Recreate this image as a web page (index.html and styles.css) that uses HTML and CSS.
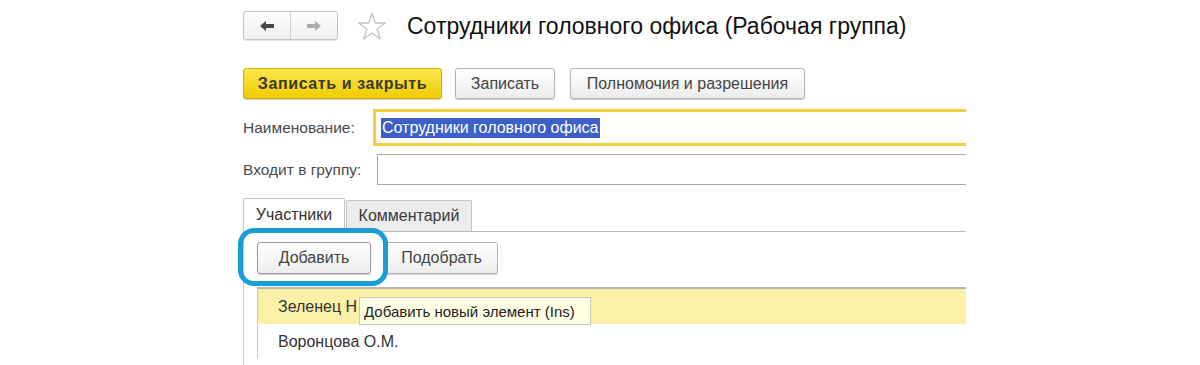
FILE: index.html
```html
<!DOCTYPE html>
<html lang="ru">
<head>
    <meta charset="UTF-8">
    <title>Сотрудники головного офиса (Рабочая группа)</title>
    <link rel="stylesheet" href="styles.css">
</head>
<body>
    <div class="form">
        <header class="titlebar">
            <div class="nav">
                <button class="nav-btn">
                    <svg width="16" height="12" viewBox="0 0 16 12"><path d="M1 6 L7 1 L7 4 L15 4 L15 8 L7 8 L7 11 Z" fill="#474747"/></svg>
                </button>
                <button class="nav-btn">
                    <svg width="16" height="12" viewBox="0 0 16 12"><path d="M15 6 L9 1 L9 4 L1 4 L1 8 L9 8 L9 11 Z" fill="#ababab"/></svg>
                </button>
            </div>
            <svg class="star" width="30" height="29" viewBox="0 0 30 29">
                <path d="M15 1.5 L18.3 11 L28.3 11 L20.2 17 L23.3 27 L15 21 L6.7 27 L9.8 17 L1.7 11 L11.7 11 Z" fill="none" stroke="#c4c4c4" stroke-width="1.3" stroke-linejoin="round"/>
            </svg>
            <h1>Сотрудники головного офиса (Рабочая группа)</h1>
        </header>

        <div class="toolbar">
            <button class="btn btn-main">Записать и закрыть</button>
            <button class="btn btn-save">Записать</button>
            <button class="btn btn-rights">Полномочия и разрешения</button>
        </div>

        <div class="field">
            <label>Наименование:</label>
            <div class="input focused"><span class="selected">Сотрудники головного офиса</span></div>
        </div>
        <div class="field">
            <label>Входит в группу:</label>
            <div class="input"></div>
        </div>

        <div class="tabs">
            <div class="tab active">Участники</div>
            <div class="tab second">Комментарий</div>
            <div class="tab-rest"></div>
        </div>

        <div class="panel">
            <div class="panel-bar">
                <button class="btn btn-add">Добавить</button>
                <button class="btn btn-pick">Подобрать</button>
                <div class="mark"></div>
            </div>
            <div class="list">
                <div class="row current">Зеленец Н</div>
                <div class="row">Воронцова О.М.</div>
                <div class="tooltip">Добавить новый элемент (Ins)</div>
            </div>
        </div>
    </div>
</body>
</html>
```

FILE: styles.css
```css
* {
    margin: 0;
    padding: 0;
    box-sizing: border-box;
    font-family: 'Liberation Sans', Arial, sans-serif;
}

body {
    background: #fff;
    color: #444;
    overflow: hidden;
}

.form {
    width: 966px;
    padding: 11px 0 0 243px;
}

/* header */
.titlebar {
    display: flex;
    align-items: center;
    height: 29px;
}
.nav {
    display: flex;
    width: 95px;
    height: 29px;
    border: 1px solid #c3c3c3;
    border-radius: 3px;
    background: linear-gradient(#fdfdfd, #efefef);
    box-shadow: 0 1px 1px rgba(0,0,0,0.12);
}
.nav-btn {
    flex: 1;
    border: none;
    background: none;
    display: flex;
    align-items: center;
    justify-content: center;
}
.nav-btn + .nav-btn {
    border-left: 1px solid #d0d0d0;
}
.star {
    margin-left: 19px;
    margin-top: 2px;
}
.titlebar h1 {
    margin-left: 20px;
    font-size: 23px;
    font-weight: normal;
    color: #111;
    margin-top: 2px;
}

/* buttons */
.btn {
    height: 31px;
    border: 1px solid #b3b3b3;
    border-radius: 3px;
    background: linear-gradient(#ffffff, #ececec);
    box-shadow: 0 1px 1px rgba(0,0,0,0.2);
    font-size: 16px;
    color: #444;
    cursor: pointer;
}
.toolbar {
    display: flex;
    margin-top: 28px;
}
.btn-main {
    width: 199px;
    font-weight: bold;
    letter-spacing: 0.6px;
    color: #3a3a2a;
    background: linear-gradient(#fbe64c, #f1cc02);
    border-color: #cdae0a;
}
.btn-save {
    width: 100px;
    margin-left: 13px;
}
.btn-rights {
    width: 235px;
    margin-left: 15px;
}

/* fields */
.field {
    display: flex;
    align-items: center;
    height: 31px;
    color: #4a4a4a;
    font-size: 15.5px;
}
.field label {
    width: 134px;
}
.input {
    flex: 1;
    height: 31px;
    border: 1px solid #aaa;
    border-right: none;
    background: #fff;
    display: flex;
    align-items: center;
    padding-left: 3px;
}
.toolbar + .field {
    margin-top: 10px;
    height: 37px;
}
.field + .field {
    margin-top: 8px;
}
.input.focused {
    border: 3px solid #f3d13c;
    border-right: none;
    height: 37px;
    margin-left: -4px;
    padding-left: 5px;
    background: #fffefa;
}
.selected {
    background: #3c60c6;
    color: #fff;
    font-size: 16px;
    line-height: 20px;
    padding: 0 1px;
}

/* tabs */
.tabs {
    display: flex;
    align-items: flex-end;
    margin-top: 13px;
    height: 34px;
    font-size: 16px;
}
.tab {
    height: 32px;
    display: flex;
    align-items: center;
    justify-content: center;
    border: 1px solid #c2c2c2;
    border-bottom: 1px solid #b8b8b8;
    border-radius: 2px 2px 0 0;
    background: #ececec;
    color: #3a3a3a;
    margin-left: 1px;
}
.tab.active {
    height: 34px;
    width: 102px;
    margin-left: 0;
    background: #fff;
    border-bottom-color: #fff;
    color: #333;
}
.tab.second {
    width: 126px;
}
.tab-rest {
    flex: 1;
    border-bottom: 1px solid #b8b8b8;
}

.panel {
    border-left: 1px solid #c8c8c8;
    padding-left: 13px;
    height: 140px;
}
.panel-bar {
    position: relative;
    display: flex;
    padding-top: 10px;
}
.btn-add {
    width: 114px;
    height: 32px;
    border-color: #999;
}
.btn-pick {
    width: 113px;
    height: 32px;
    margin-left: 14px;
}
.mark {
    position: absolute;
    left: -19px;
    top: -4px;
    width: 150px;
    height: 58px;
    border: 5px solid #1a9cd8;
    border-radius: 16px;
}

/* list */
.list {
    position: relative;
    margin-top: 13px;
    border-top: 2px solid #b5b5b5;
    border-left: 1px solid #c8c8c8;
    font-size: 16px;
    color: #333;
}
.row {
    height: 35px;
    display: flex;
    align-items: center;
    padding-left: 20px;
}
.row.current {
    background: #fbf1a6;
}
.tooltip {
    position: absolute;
    left: 101px;
    top: 8px;
    width: 232px;
    height: 28px;
    padding-left: 4px;
    display: flex;
    align-items: center;
    background: #ffffe6;
    border: 1px solid #c8c8b0;
    color: #222;
    font-size: 15px;
}
```
